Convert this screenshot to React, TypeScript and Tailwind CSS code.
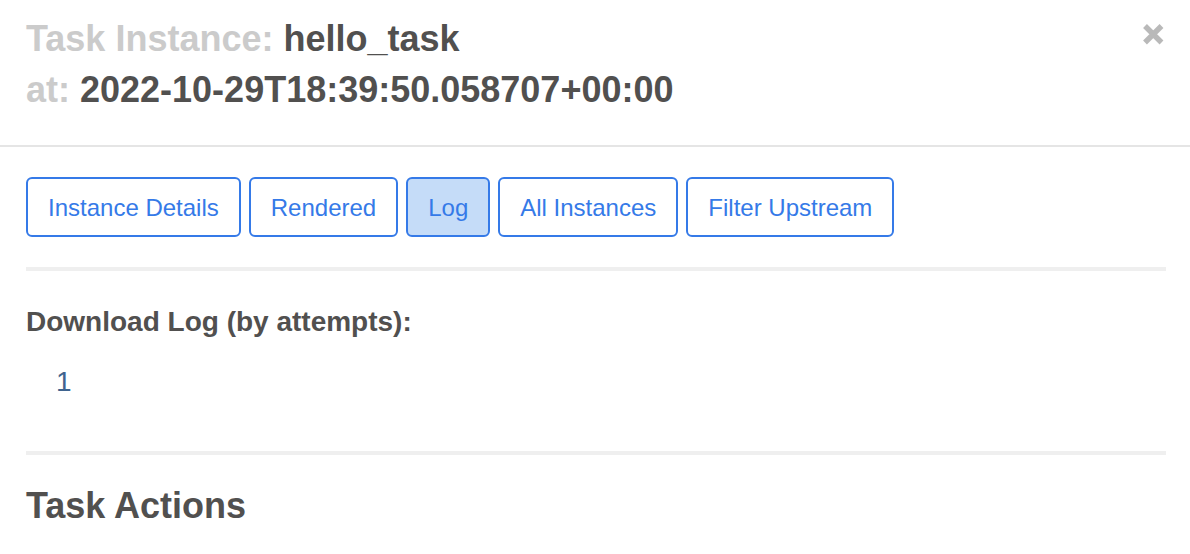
const tabs = ['Instance Details', 'Rendered', 'Log', 'All Instances', 'Filter Upstream'];

export default function App() {
  return (
    <main className="bg-white font-['Liberation_Sans',Arial,sans-serif] text-[#51504f]">
      <header className="flex items-start justify-between border-b-2 border-[#e5e5e5] px-[26px] pt-[13px] pb-[30px]">
        <h1 className="text-[36px] leading-[51px] font-bold">
          <span className="text-[#cbcbcb]">Task Instance:</span> hello_task
          <br />
          <span className="text-[#cbcbcb]">at:</span> 2022-10-29T18:39:50.058707+00:00
        </h1>
        <button type="button" aria-label="Close" className="mt-[11px] text-[#b9b9b9]">
          <svg width="21" height="21" viewBox="0 0 21 21" stroke="currentColor" strokeWidth="5.4" aria-hidden="true">
            <path d="M2 2 L18.5 18.5 M18.5 2 L2 18.5" />
          </svg>
        </button>
      </header>
      <section className="px-6 pt-[30px] pl-[26px]">
        <nav className="flex flex-wrap gap-2">
          {tabs.map((tab) => (
            <button
              key={tab}
              type="button"
              className={`h-[60px] rounded-md border-2 border-[#357ae8] px-5 pt-0.5 text-[24px] text-[#357ae8] ${tab === 'Log' ? 'bg-[#c5dcf8]' : 'bg-white'}`}
            >
              {tab}
            </button>
          ))}
        </nav>
        <hr className="mt-[30px] border-t-4 border-[#efefef]" />
        <h2 className="mt-[31px] text-[28px] leading-10 font-bold">Download Log (by attempts):</h2>
        <ul className="mt-5 pl-[30px] text-[28px] leading-10">
          <li>
            <a href="#attempt-1" className="text-[#3f648f]">1</a>
          </li>
        </ul>
        <hr className="mt-[49px] border-t-4 border-[#efefef]" />
        <h2 className="mt-[31px] text-[36px] leading-10 font-bold">Task Actions</h2>
      </section>
    </main>
  );
}
